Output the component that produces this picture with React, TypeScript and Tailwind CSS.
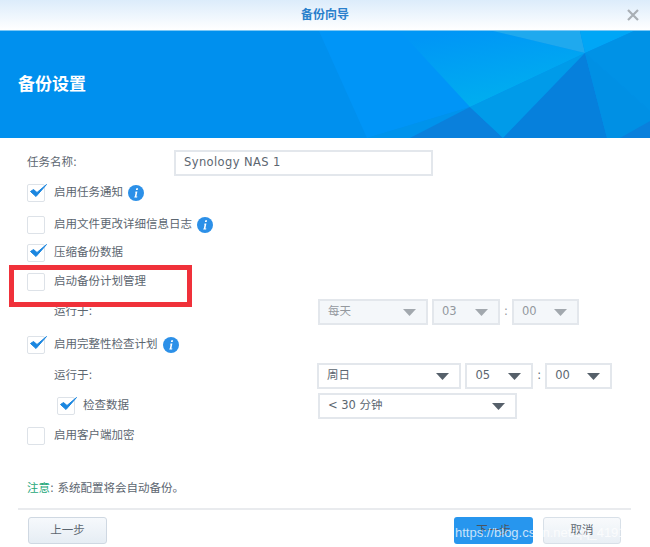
const font = "font-['DejaVu_Sans','Noto_Sans_CJK_SC',sans-serif]";

function Check({ checked = false }: { checked?: boolean }) {
  return (
    <span className="relative block w-[18px] h-[18px] shrink-0 rounded-[2px] border border-[#dde2e8] bg-white">
      {checked && (
        <svg className="absolute left-[1px] top-[-3px]" width="20" height="18" viewBox="0 0 20 18">
          <path d="M1.5 9.5 L7 14.5 L17.5 2.5 L8 10.5 L4.5 7.5 Z" fill="#1a86e0" stroke="#1a86e0" strokeWidth="1" strokeLinejoin="round" />
        </svg>
      )}
    </span>
  );
}

function Info() {
  return (
    <svg className="shrink-0" width="16" height="16" viewBox="0 0 16 16">
      <circle cx="8" cy="8" r="8" fill="#2c90e8" />
      <path d="M8.3 3.2 h1.8 l-.4 1.8 h-1.8 Z M7.6 6.4 h1.8 l-1 5 h1 l-.3 1.2 h-2.9 l.3-1.2 h.3 l.8-3.8 h-.6 Z" fill="#fff" />
    </svg>
  );
}

function Select({ label, w, off = false }: { label: string; w: string; off?: boolean }) {
  return (
    <div className={`${w} h-[26px] flex items-center justify-between pl-[8px] pr-[10px] border-2 border-[#e3e7ec] ${off ? "bg-[#f4f7fa] text-[#93989e]" : "bg-white text-[#5c6670]"}`}>
      <span>{label}</span>
      <svg width="13" height="7" viewBox="0 0 13 7">
        <path d="M0 0 H13 L6.5 7 Z" fill={off ? "#a2a8ae" : "#56606a"} />
      </svg>
    </div>
  );
}

function Row({ className, children }: { className: string; children: React.ReactNode }) {
  return <div className={`flex items-center h-[26px] ${className}`}>{children}</div>;
}

function CheckRow({ label, checked, info, className }: { label: string; checked?: boolean; info?: boolean; className: string }) {
  return (
    <Row className={className}>
      <Check checked={checked} />
      <span className="ml-[9px]">{label}</span>
      {info && <span className="ml-[5px]"><Info /></span>}
    </Row>
  );
}

export default function App() {
  return (
    <div className={`relative w-[650px] h-[547px] overflow-hidden bg-white text-[11.5px] text-[#5c6670] ${font}`}>
      <div className="h-[31px] flex items-center justify-center relative border-b border-[#7cc8f5] bg-gradient-to-b from-[#dcecfb] to-white">
        <span className="text-[12px] font-bold text-[#2a80cc]">备份向导</span>
        <svg className="absolute right-[11px] top-[9px]" width="12" height="12" viewBox="0 0 12 12">
          <path d="M1 1 L11 11 M11 1 L1 11" stroke="#a9afb5" strokeWidth="2.2" />
        </svg>
      </div>

      <div className="relative h-[107px] bg-[#0090ee] flex items-center pl-[18px] overflow-hidden">
        <svg className="absolute inset-0" width="650" height="107" viewBox="0 0 650 107">
          <defs>
            <linearGradient id="glow" x1="0.3" y1="0" x2="0.75" y2="1">
              <stop offset="0" stopColor="#0096f6" />
              <stop offset="1" stopColor="#00b2ee" />
            </linearGradient>
          </defs>
          <polygon points="319,0 493,0 585,22 470,76 367,107" fill="#0095f7" />
          <polygon points="400,0 493,0 585,22 470,76" fill="url(#glow)" />
          <polygon points="493,0 580,0 585,22" fill="#1fa9ee" />
          <polygon points="580,0 634,0 585,22" fill="#00a6f6" />
          <polygon points="634,0 650,0 650,80 585,22" fill="#0092e6" />
          <polygon points="470,76 410,107 367,107" fill="#0093ec" />
          <polygon points="470,76 410,107 503,107" fill="#0a80dc" />
          <polygon points="470,76 585,22 503,107" fill="#009be9" />
          <polygon points="585,22 503,107 607,107" fill="#0680dc" />
          <polygon points="585,22 650,80 650,107 607,107" fill="#0090e4" />
          <polygon points="650,90 650,107 620,107" fill="#0a80dc" />
        </svg>
        <h1 className="relative text-[17px] font-bold text-white">备份设置</h1>
      </div>

      <div className="pl-[27px] pr-[38px]">
        <Row className="mt-[12px]">
          <span className="w-[147px]">任务名称:</span>
          <div className="w-[259px] h-[26px] flex items-center pl-[8px] border-2 border-[#e3e7ec] text-[#5c6670] text-[11.5px] tracking-[0.4px]">Synology NAS 1</div>
        </Row>
        <CheckRow className="mt-[4px]" label="启用任务通知" checked info />
        <CheckRow className="mt-[6px]" label="启用文件更改详细信息日志" info />
        <CheckRow className="mt-[2px]" label="压缩备份数据" checked />
        <CheckRow className="mt-[3px]" label="启动备份计划管理" />
        <Row className="mt-[4px]">
          <span className="w-[291px] pl-[27px]">运行于:</span>
          <Select label="每天" w="w-[110px]" off />
          <span className="w-[4px]" />
          <Select label="03" w="w-[68px]" off />
          <span className="w-[12px] text-center text-[#93989e]">:</span>
          <Select label="00" w="w-[67px]" off />
        </Row>
        <CheckRow className="mt-[7px]" label="启用完整性检查计划" checked info />
        <Row className="mt-[5px]">
          <span className="w-[291px] pl-[27px]">运行于:</span>
          <Select label="周日" w="w-[145px]" />
          <span className="w-[4px]" />
          <Select label="05" w="w-[68px]" />
          <span className="w-[12px] text-center">:</span>
          <Select label="00" w="w-[67px]" />
        </Row>
        <Row className="mt-[4px]">
          <div className="w-[291px] flex items-center pl-[30px]">
            <Check checked />
            <span className="ml-[8px]">检查数据</span>
          </div>
          <Select label="< 30 分钟" w="w-[199px]" />
        </Row>
        <CheckRow className="mt-[4px]" label="启用客户端加密" />
        <p className="mt-[31px] h-[16px] leading-[16px]"><span className="text-[#1fa87a]">注意</span>: 系统配置将会自动备份。</p>
      </div>

      <div className="mt-[12px] ml-[18px] mr-[19px] border-t-2 border-[#e9ebee]" />
      <div className="mt-[7px] pl-[28px] pr-[29px] flex">
        <button className="w-[79px] h-[27px] rounded-[3px] border border-[#cfd8e2] bg-gradient-to-b from-[#f6f9fc] to-[#e6edf4] text-[#5c6670]">上一步</button>
        <button className="ml-auto w-[79px] h-[27px] rounded-[3px] bg-[#2796ee] text-[#4a5560]">下一步</button>
        <button className="ml-[10px] w-[78px] h-[27px] rounded-[3px] border border-[#d8e0e8] bg-gradient-to-b from-[#f8fafc] to-[#e9eff5] text-[#5c6670]">取消</button>
      </div>

      <div className="absolute left-[9px] top-[265px] w-[183px] h-[42px] border-[5px] border-[#f0313a]" />
      <span className="absolute left-[455px] top-[525px] text-[13px] leading-[16px] font-['Liberation_Sans',sans-serif] text-white/75 whitespace-nowrap">https://blog.csdn.net/qq_41911582</span>
    </div>
  );
}
